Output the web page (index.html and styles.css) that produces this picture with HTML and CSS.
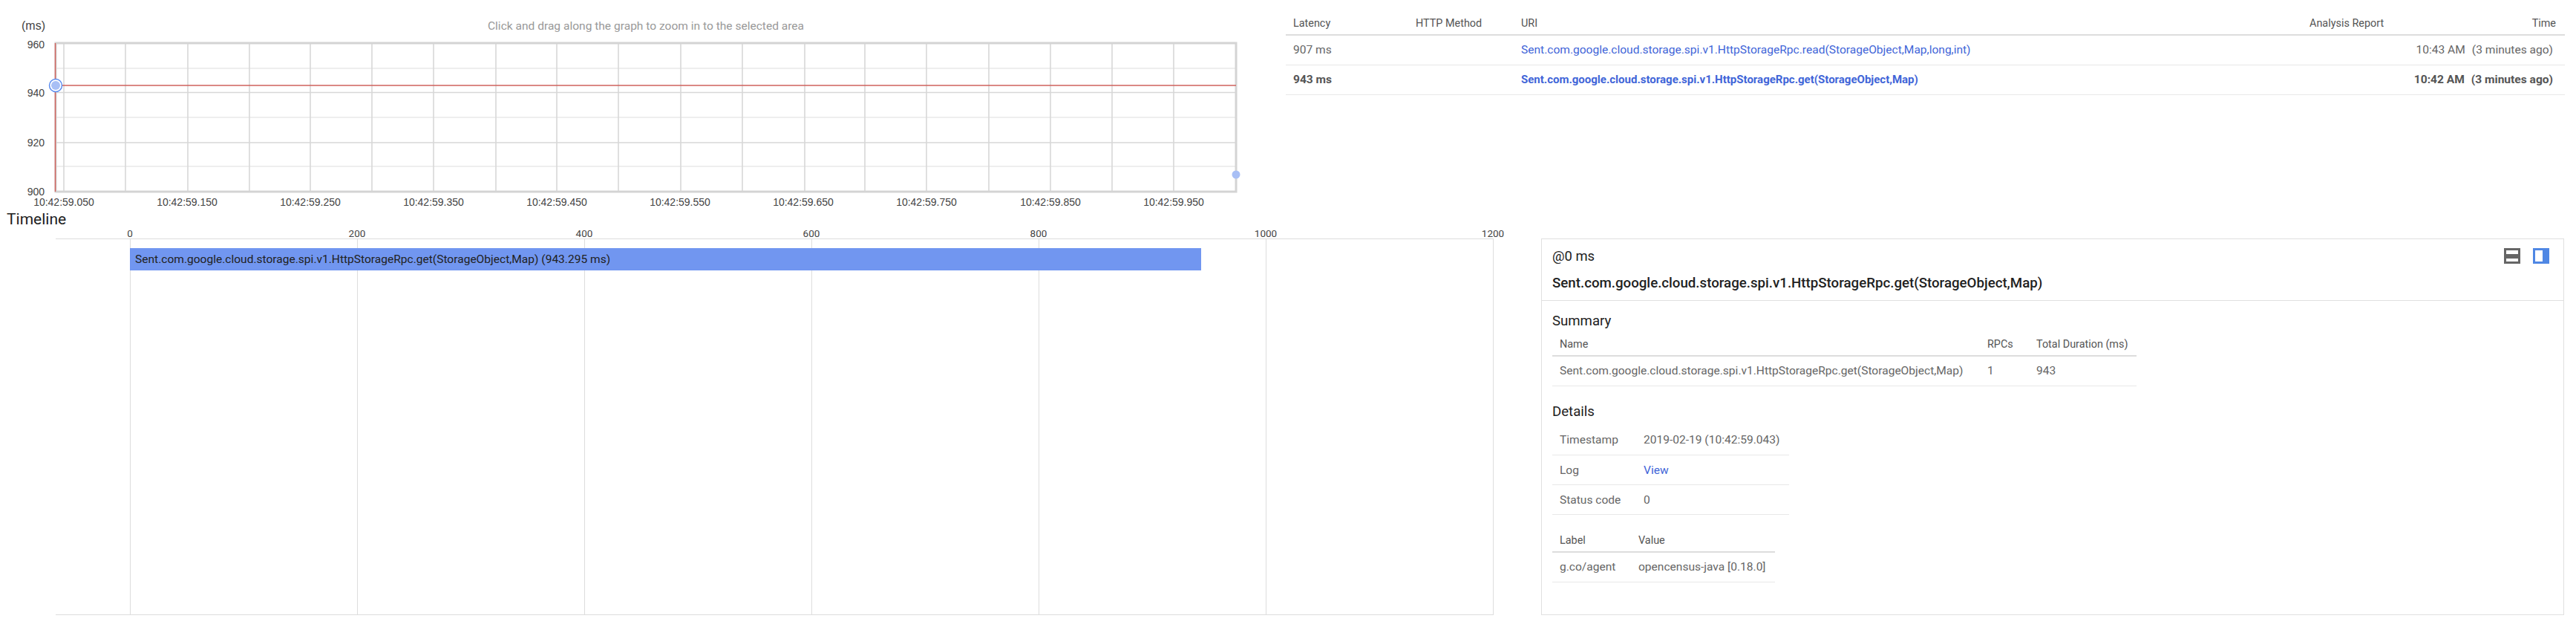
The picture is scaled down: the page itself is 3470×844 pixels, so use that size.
FILE: index.html
```html
<!DOCTYPE html>
<html>
  <head>
    <meta name="viewport" content="width=device-width, initial-scale=1" />
    <link rel="stylesheet" href="styles.css">
  </head>
  <body>
    <div class="top">
      <svg class="chart" width="1732" height="283" viewBox="0 0 1732 283">
        <text class="unit" x="29" y="40">(ms)</text>
        <text class="hint" x="870" y="40" text-anchor="middle">Click and drag along the graph to zoom in to the selected area</text>

        <g class="minor">
          <path d="M75 92H1665M75 158H1665M75 224H1665" />
        </g>
        <g class="major">
          <path d="M75 124.500H1665M75 192H1665" />
          <path d="M86 58V258M169 58V258M253 58V258M336 58V258M418 58V258M501 58V258M584 58V258M668 58V258M750 58V258M833 58V258M917 58V258M1000 58V258M1084 58V258M1165 58V258M1248 58V258M1332 58V258M1415 58V258M1498 58V258M1581 58V258" />
        </g>
        <rect class="frame" x="75" y="58" width="1590" height="200" />

        <path class="series" d="M74.500 58V258M75 115H1665" />
        <circle class="point-ring" cx="75" cy="115" r="8.500" />
        <circle class="point" cx="75" cy="115" r="6" />
        <circle class="point" cx="1665" cy="235" r="5.500" />

        <g class="y-labels" text-anchor="end">
          <text x="60" y="65">960</text>
          <text x="60" y="130">940</text>
          <text x="60" y="197">920</text>
          <text x="60" y="263">900</text>
        </g>
        <g class="x-labels" text-anchor="middle">
          <text x="86" y="277">10:42:59.050</text>
          <text x="252" y="277">10:42:59.150</text>
          <text x="418" y="277">10:42:59.250</text>
          <text x="584" y="277">10:42:59.350</text>
          <text x="750" y="277">10:42:59.450</text>
          <text x="916" y="277">10:42:59.550</text>
          <text x="1082" y="277">10:42:59.650</text>
          <text x="1248" y="277">10:42:59.750</text>
          <text x="1415" y="277">10:42:59.850</text>
          <text x="1581" y="277">10:42:59.950</text>
        </g>
      </svg>

      <table class="traces">
        <thead>
          <tr>
            <th class="col-latency">Latency</th>
            <th class="col-method">HTTP Method</th>
            <th class="col-uri">URI</th>
            <th class="col-report">Analysis Report</th>
            <th class="col-time">Time</th>
          </tr>
        </thead>
        <tbody>
          <tr>
            <td>907 ms</td>
            <td></td>
            <td><a href="#">Sent.com.google.cloud.storage.spi.v1.HttpStorageRpc.read(StorageObject,Map,long,int)</a></td>
            <td></td>
            <td class="col-time"><span class="when">10:43 AM</span><span class="ago">(3 minutes ago)</span></td>
          </tr>
          <tr class="selected">
            <td>943 ms</td>
            <td></td>
            <td><a href="#">Sent.com.google.cloud.storage.spi.v1.HttpStorageRpc.get(StorageObject,Map)</a></td>
            <td></td>
            <td class="col-time"><span class="when">10:42 AM</span><span class="ago">(3 minutes ago)</span></td>
          </tr>
        </tbody>
      </table>
    </div>

    <h2 class="timeline-title">Timeline</h2>

    <div class="bottom">
      <svg class="timeline" width="2032" height="523" viewBox="0 305 2032 523">
        <path class="grid" d="M75 321.500H2011.500M75 827.500H2011.500M175.500 321V828M481.500 321V828M787.500 321V828M1093.500 321V828M1399.500 321V828M1705.500 321V828M2011.500 321V828" />
        <g class="axis" text-anchor="middle">
          <text x="175" y="319">0</text>
          <text x="481" y="319">200</text>
          <text x="787" y="319">400</text>
          <text x="1093" y="319">600</text>
          <text x="1399" y="319">800</text>
          <text x="1705" y="319">1000</text>
          <text x="2011" y="319">1200</text>
        </g>
        <rect class="bar" x="175" y="334" width="1443" height="30" />
        <text class="bar-label" x="182" y="354">Sent.com.google.cloud.storage.spi.v1.HttpStorageRpc.get(StorageObject,Map) (943.295 ms)</text>
      </svg>

      <section class="panel">
        <header class="panel-head">
          <div class="panel-offset">
            <span>@0 ms</span>
            <span class="panel-icons">
              <svg width="22" height="21" viewBox="0 0 22 21"><path fill="#666" fill-rule="evenodd" d="M0 0H22V21H0ZM3 3V8H19V3ZM3 14V18H19V14Z" /></svg>
              <svg width="22" height="21" viewBox="0 0 22 21"><path fill="#4f87e4" fill-rule="evenodd" d="M0 0H22V21H0ZM3 3V18H13V3Z" /></svg>
            </span>
          </div>
          <div class="panel-name">Sent.com.google.cloud.storage.spi.v1.HttpStorageRpc.get(StorageObject,Map)</div>
        </header>

        <div class="panel-body">
          <h3>Summary</h3>
          <table class="info summary">
            <thead>
              <tr><th class="col-name">Name</th><th class="col-rpcs">RPCs</th><th>Total Duration (ms)</th></tr>
            </thead>
            <tbody>
              <tr><td>Sent.com.google.cloud.storage.spi.v1.HttpStorageRpc.get(StorageObject,Map)</td><td>1</td><td>943</td></tr>
            </tbody>
          </table>

          <h3 class="details-title">Details</h3>
          <table class="info details">
            <tbody>
              <tr><td class="col-key">Timestamp</td><td>2019-02-19 (10:42:59.043)</td></tr>
              <tr><td class="col-key">Log</td><td><a href="#">View</a></td></tr>
              <tr><td class="col-key">Status code</td><td>0</td></tr>
            </tbody>
          </table>

          <table class="info labels">
            <thead>
              <tr><th class="col-label">Label</th><th>Value</th></tr>
            </thead>
            <tbody>
              <tr><td>g.co/agent</td><td>opencensus-java [0.18.0]</td></tr>
            </tbody>
          </table>
        </div>
      </section>
    </div>
  </body>
</html>
```

FILE: styles.css
```css
* {
  box-sizing: border-box;
}

body {
  margin: 0;
  font-family: Roboto, Arial, sans-serif;
  font-size: 15.55px;
  color: #666;
  background: #fff;
}

a {
  color: #3f65d8;
  text-decoration: none;
}

table {
  border-collapse: collapse;
  table-layout: fixed;
}

th {
  font-size: 14.4px;
  font-weight: 400;
  color: #555;
  text-align: left;
  padding: 0 0 0 10px;
  height: 30px;
  border-bottom: 2px solid #ddd;
  white-space: nowrap;
}

td {
  padding: 0 0 0 10px;
  height: 40px;
  border-bottom: 1px solid #e8e8e8;
  white-space: nowrap;
}

.top {
  display: flex;
  height: 283px;
}

.chart {
  flex: none;
  font-family: "Liberation Sans", Arial, sans-serif;
  font-size: 14px;
}

.unit,
.y-labels,
.x-labels {
  fill: #444;
}

.unit {
  font-size: 16px;
}

.hint {
  fill: #999;
  font-family: Roboto, Arial, sans-serif;
  font-size: 15.55px;
}

.minor path {
  fill: none;
  stroke: #eee;
  stroke-width: 2;
}

.major path {
  fill: none;
  stroke: #d8d8d8;
  stroke-width: 1.600;
}

.frame {
  fill: none;
  stroke: #d4d4d4;
  stroke-width: 3;
}

.series {
  fill: none;
  stroke: #cf625c;
  stroke-width: 1.500;
}

.point-ring {
  fill: #fff;
  stroke: #5a8cf0;
  stroke-width: 1.500;
}

.point {
  fill: #a8bff5;
}

.traces {
  width: 1723px;
  height: 110px;
  margin-top: 17px;
}

.col-latency {
  width: 165px;
}

.col-method {
  width: 142px;
}

.col-uri {
  width: 1062px;
}

.col-report {
  width: 130px;
}

.col-time {
  text-align: right;
  padding-right: 12px;
}

.traces td.col-time {
  padding-right: 16px;
}

.when {
  margin-right: 9px;
}

.selected td {
  font-weight: 700;
  color: #555;
}

.selected a {
  font-size: 15px;
}

.timeline-title {
  height: 22px;
  margin: 0;
  padding-left: 9px;
  font-size: 21px;
  font-weight: 400;
  line-height: 24px;
  color: #212121;
}

.bottom {
  display: flex;
  height: 539px;
}

.timeline {
  flex: none;
  font-size: 13.5px;
}

.grid {
  fill: none;
  stroke: #ddd;
  stroke-width: 1;
}

.axis {
  fill: #444;
}

.bar {
  fill: #7196f0;
}

.bar-label {
  fill: #222;
  font-size: 15.55px;
}

.panel {
  width: 1378px;
  height: 507px;
  margin: 16px 0 0 44px;
  border: 1px solid #e0e0e0;
}

.panel-head {
  height: 83px;
  padding: 12px 14px 0;
  border-bottom: 1px solid #e0e0e0;
  color: #212121;
}

.panel-offset {
  display: flex;
  justify-content: space-between;
  font-size: 18.4px;
  line-height: 22px;
}

.panel-icons {
  display: flex;
  gap: 17px;
  padding-right: 5px;
}

.panel-name {
  margin-top: 14px;
  font-size: 18.7px;
  font-weight: 500;
  line-height: 22px;
}

.panel-body {
  padding: 16px 14px 0;
}

h3 {
  margin: 0;
  font-size: 18.6px;
  font-weight: 400;
  line-height: 22px;
  color: #212121;
}

.summary {
  width: 787px;
  margin-top: 6px;
}

.col-name {
  width: 576px;
}

.col-rpcs {
  width: 66px;
}

.details-title {
  margin-top: 23px;
}

.details {
  width: 319px;
  margin-top: 8px;
}

.col-key {
  width: 113px;
}

.labels {
  width: 300px;
  margin-top: 20px;
}

.col-label {
  width: 106px;
}
```
